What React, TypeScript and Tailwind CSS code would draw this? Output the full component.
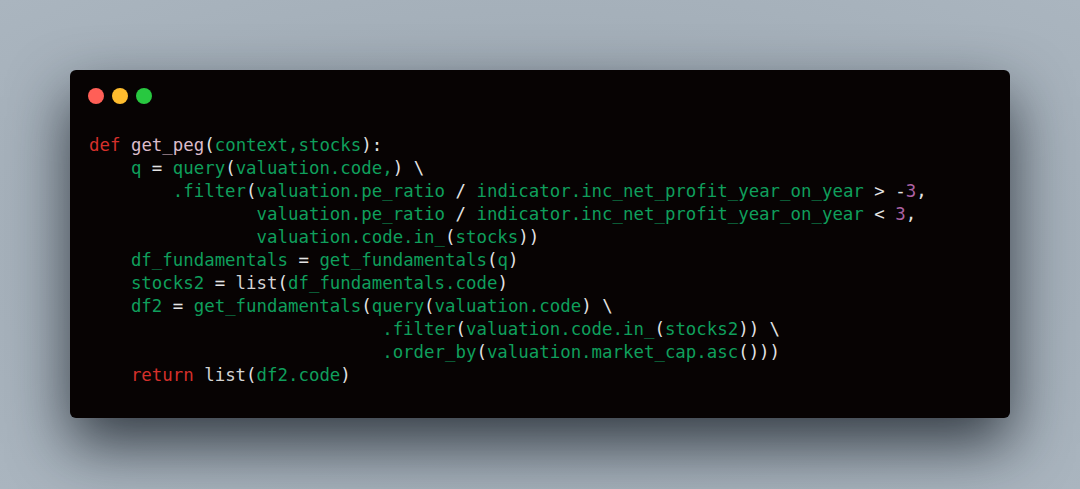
const G = 'text-[#0f9f5c]';
const W = 'text-[#e4e4e4]';
const R = 'text-[#d5302b]';
const P = 'text-[#dcbccb]';
const N = 'text-[#ad62a4]';
const L = 'text-[#d4d4d4]';

type Tok = [string, string];

const lines: Tok[][] = [
  [['def', R], [' ', W], ['get_peg', P], ['(', W], ['context,stocks', G], ['):', W]],
  [['    ', W], ['q', G], [' = ', W], ['query', G], ['(', W], ['valuation.code,', G], [') \\', W]],
  [['        ', W], ['.filter', G], ['(', W], ['valuation.pe_ratio', G], [' / ', W], ['indicator.inc_net_profit_year_on_year', G], [' > -', W], ['3', N], [',', W]],
  [['                ', W], ['valuation.pe_ratio', G], [' / ', W], ['indicator.inc_net_profit_year_on_year', G], [' < ', W], ['3', N], [',', W]],
  [['                ', W], ['valuation.code.in_', G], ['(', W], ['stocks', G], ['))', W]],
  [['    ', W], ['df_fundamentals', G], [' = ', W], ['get_fundamentals', G], ['(', W], ['q', G], [')', W]],
  [['    ', W], ['stocks2', G], [' = ', W], ['list', L], ['(', W], ['df_fundamentals.code', G], [')', W]],
  [['    ', W], ['df2', G], [' = ', W], ['get_fundamentals', G], ['(', W], ['query', G], ['(', W], ['valuation.code', G], [') \\', W]],
  [['                            ', W], ['.filter', G], ['(', W], ['valuation.code.in_', G], ['(', W], ['stocks2', G], [')) \\', W]],
  [['                            ', W], ['.order_by', G], ['(', W], ['valuation.market_cap.asc', G], ['()))', W]],
  [['    ', W], ['return', R], [' ', W], ['list', L], ['(', W], ['df2.code', G], [')', W]],
];

export default function App() {
  return (
    <div className="w-full h-[489px] overflow-hidden bg-[radial-gradient(ellipse_at_center,#7d8892_0%,#a3aeb8_55%,#aab5bf_100%)] flex justify-center pt-[70px]">
      <div className="w-[940px] h-[348px] bg-[#070303] rounded-[6px] shadow-[0_26px_60px_rgba(15,22,30,0.75)] pt-[18px] pl-[18px]">
        <div className="flex gap-[8px]">
          <span className="w-[16px] h-[16px] rounded-full bg-[#ff5f57]" />
          <span className="w-[16px] h-[16px] rounded-full bg-[#febc2e]" />
          <span className="w-[16px] h-[16px] rounded-full bg-[#28c840]" />
        </div>
        <pre className="mt-[30px] ml-[1px] font-['DejaVu_Sans_Mono',monospace] text-[17.4px] leading-[23px]">
          {lines.map((line, i) => (
            <div key={i}>
              {line.map(([t, c], j) => (
                <span key={j} className={c}>{t}</span>
              ))}
            </div>
          ))}
        </pre>
      </div>
    </div>
  );
}
